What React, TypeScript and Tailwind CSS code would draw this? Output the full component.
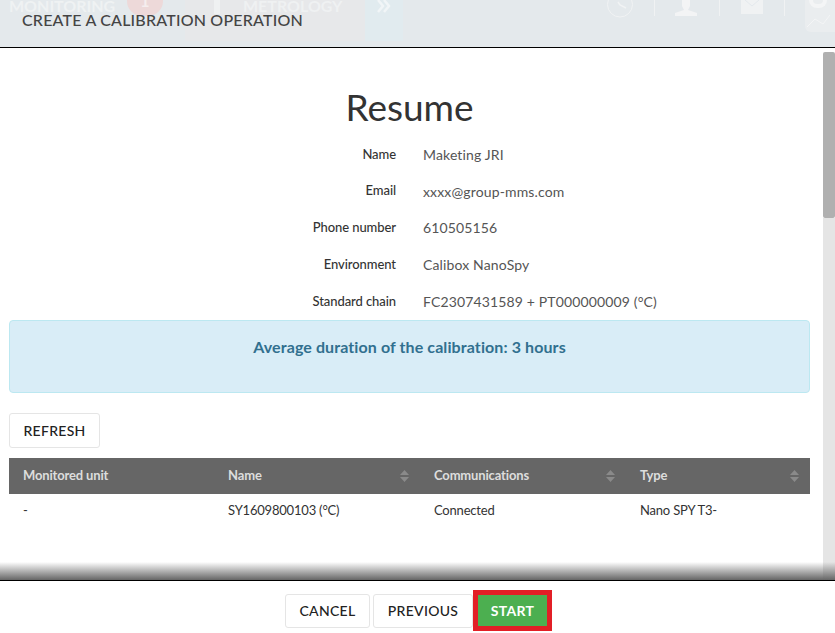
import React from 'react';

const rows = [
    { label: 'Name', value: 'Maketing JRI' },
    { label: 'Email', value: 'xxxx@group-mms.com' },
    { label: 'Phone number', value: '610505156' },
    { label: 'Environment', value: 'Calibox NanoSpy' },
    { label: 'Standard chain', value: 'FC2307431589 + PT000000009 (°C)' },
];

const SortIcon = () => (
    <svg width="9" height="12" viewBox="0 0 9 12" className="shrink-0">
        <path d="M4.5 0 L9 5 H0 Z M0 7 H9 L4.5 12 Z" fill="#8a8a8a" />
    </svg>
);

const HeaderGhost = () => (
    <div className="absolute inset-0 overflow-hidden">
        {/* Blurred page behind the modal */}
        <div className="absolute left-[185px] top-0 h-[41px] w-[180px] bg-[#e7e8ea]" />
        <div className="absolute left-[365px] top-0 h-[41px] w-[38px] bg-[#e1ebef]" />
        <div className="absolute left-[9px] top-[-6px] text-[16px] font-bold text-[#eff2f3]">MONITORING</div>
        <div className="absolute left-[127px] top-[-14px] flex h-[30px] w-[36px] items-end justify-center rounded-full bg-[#edd9d9] pb-[5px] text-[16px] leading-[20px] font-bold text-[#f5eeee]">
            1
        </div>
        <div className="absolute left-[214px] top-0 h-[14px] w-[6px] bg-[#eff1f2]" />
        <div className="absolute left-[243px] top-[-6px] text-[16px] font-bold text-[#eff1f2]">METROLOGY</div>
        <svg width="14" height="14" viewBox="0 0 14 14" className="absolute left-[377px] top-0">
            <path d="M1 0 L6 6 L1 12 M7 0 L12 6 L7 12" fill="none" stroke="#f1f5f7" strokeWidth="2.5" />
        </svg>
        <svg width="28" height="18" viewBox="0 0 28 18" className="absolute left-[606px] top-0">
            <circle cx="14" cy="4.5" r="12.5" fill="none" stroke="#f1f3f4" strokeWidth="1" />
            <path d="M12 2 L14 5 L20 8" fill="none" stroke="#f1f3f4" strokeWidth="1.5" />
        </svg>
        <div className="absolute left-[654px] top-0 h-[16px] w-px bg-[#f0f2f3]" />
        <svg width="22" height="16" viewBox="0 0 22 16" className="absolute left-[675px] top-0">
            <path d="M7 0 H15 V6 L13 10 L22 13 V16 H0 V13 L9 10 L7 6 Z" fill="#f3f4f5" />
        </svg>
        <div className="absolute left-[719px] top-0 h-[16px] w-px bg-[#f0f2f3]" />
        <svg width="22" height="14" viewBox="0 0 22 14" className="absolute left-[741px] top-0">
            <path d="M0 0 H22 V14 H0 Z" fill="#f0f2f3" />
            <path d="M4 0 L11 6 L18 0" fill="none" stroke="#e4e9ec" strokeWidth="1" />
        </svg>
        <div className="absolute left-[784px] top-0 h-[16px] w-px bg-[#f0f2f3]" />
        <div className="absolute left-[805px] top-[-4px] h-[36px] w-[40px] rounded-[6px] bg-[#eaedef]" />
        <div className="absolute left-[809px] top-0 h-[8px] w-[18px] rounded-b-full border-[4px] border-t-0 border-[#f4f5f6]" />
        <svg width="30" height="16" viewBox="0 0 30 16" className="absolute left-[805px] top-[12px]">
            <path d="M2 15 L10 7 L18 12 L25 3" fill="none" stroke="#f4f5f6" strokeWidth="1" />
        </svg>
    </div>
);

export default function App() {
    return (
        <div className="flex h-[633px] w-[835px] flex-col overflow-hidden bg-white font-['Lato',sans-serif] text-[#333]">
            {/* Modal title */}
            <div className="relative h-[48px] shrink-0 border-b border-black bg-[#e4e9ec]">
                <HeaderGhost />
                <h1 className="relative pl-[22px] pt-[10px] text-[16px] leading-[20px] font-medium tracking-[0.2px] text-[#444]">
                    CREATE A CALIBRATION OPERATION
                </h1>
            </div>

            {/* Body */}
            <div className="relative flex min-h-0 flex-1">
                <div className="min-w-0 flex-1 pl-[9px] pr-[13px]">
                    <h2 className="pt-[36px] text-center text-[37px] leading-[46px] font-normal">Resume</h2>
                    <div className="mt-[6px] flex flex-col">
                        {rows.map((row) => (
                            <div key={row.label} className="flex h-[36.75px] items-center">
                                <div className="w-[387px] text-right text-[13px] font-medium tracking-[-0.08px] text-[#333]">
                                    {row.label}
                                </div>
                                <div className="ml-[27px] text-[14px] tracking-[0.14px] text-[#555]">{row.value}</div>
                            </div>
                        ))}
                    </div>
                    <div className="h-[73px] rounded-[4px] border border-[#bce8f1] bg-[#d9edf7] pt-[16px] text-center text-[16px] leading-[20px] font-bold tracking-[0.1px] text-[#31708f]">
                        Average duration of the calibration: 3 hours
                    </div>
                    <button className="mt-[20px] block h-[35px] w-[91px] rounded-[3px] border border-[#e5e5e5] bg-white text-[14px] font-medium tracking-[0.3px] text-[#222]">
                        REFRESH
                    </button>
                    <div className="mt-[10px] grid h-[36px] grid-cols-[205px_206px_206px_1fr] items-center bg-[#666] text-[13px] font-bold tracking-[-0.15px] text-[#ddd]">
                        <div className="pl-[14px]">Monitored unit</div>
                        {['Name', 'Communications', 'Type'].map((title) => (
                            <div key={title} className="flex items-center justify-between pl-[14px] pr-[11px]">
                                <span>{title}</span>
                                <SortIcon />
                            </div>
                        ))}
                    </div>
                    <div className="grid h-[33px] grid-cols-[205px_206px_206px_1fr] items-center text-[13px] tracking-[-0.2px] text-[#333]">
                        <div className="pl-[14px]">-</div>
                        <div className="pl-[14px]">SY1609800103 (°C)</div>
                        <div className="pl-[14px]">Connected</div>
                        <div className="pl-[14px]">Nano SPY T3-</div>
                    </div>
                </div>

                {/* Scrollbar */}
                <div className="flex w-[12px] shrink-0 flex-col pt-[4px]">
                    <div className="h-[166px] rounded-[2px] bg-[#b0b0b0]" />
                    <div className="flex-1 bg-[#e5e5e5]" />
                </div>

                {/* Shadow above footer */}
                <div className="absolute inset-x-0 bottom-0 h-[18px] bg-gradient-to-b from-transparent to-[#666]" />
            </div>

            {/* Footer */}
            <div className="flex h-[53px] shrink-0 items-center justify-center border-t border-black bg-white pl-[2px] pt-[7px]">
                <button className="h-[34px] w-[85px] rounded-[3px] border border-[#e5e5e5] bg-white pb-[1px] text-[14px] font-medium tracking-[0.3px] text-[#222]">
                    CANCEL
                </button>
                <button className="ml-[3px] h-[34px] w-[100px] rounded-[3px] border border-[#e5e5e5] bg-white pb-[1px] text-[14px] font-medium tracking-[0.3px] text-[#222]">
                    PREVIOUS
                </button>
                <button className="h-[41px] w-[79px] border-[5px] border-[#e21f26] bg-[#4caf50] pb-[1px] text-[14px] font-bold tracking-[0.3px] text-white">
                    START
                </button>
            </div>
        </div>
    );
}
